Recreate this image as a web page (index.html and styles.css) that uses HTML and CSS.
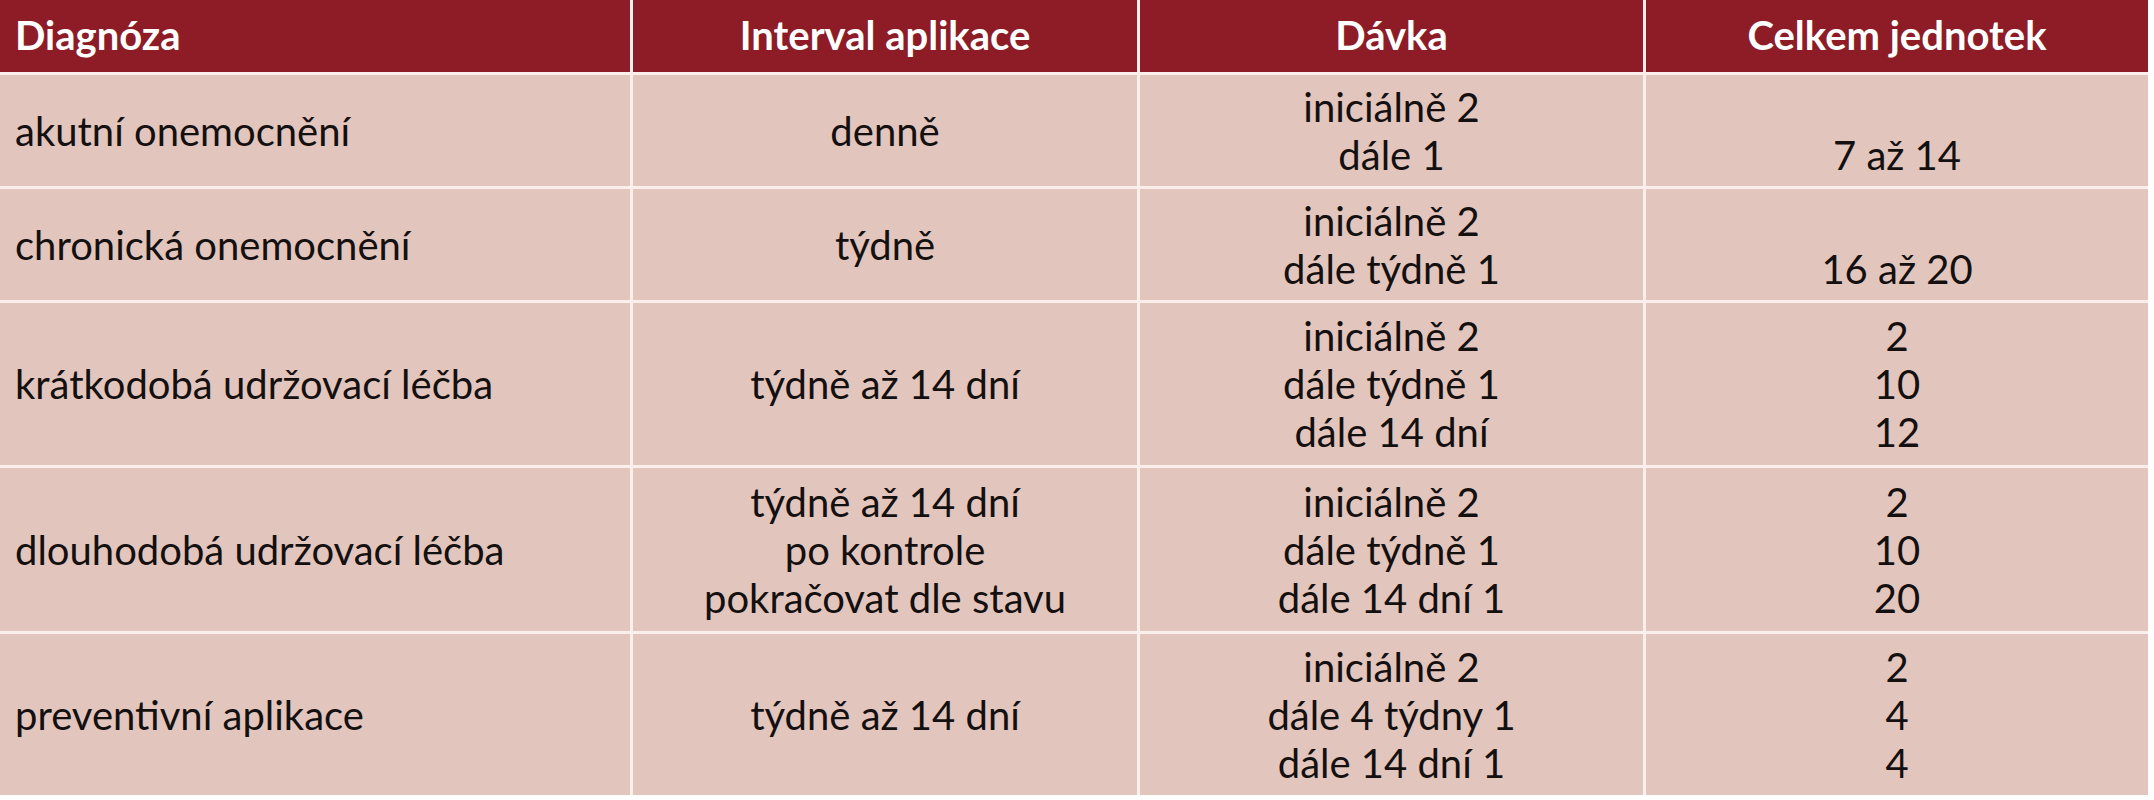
FILE: index.html
```html
<!DOCTYPE html>
<html lang="cs">
<head>
<meta charset="utf-8">
<title>Dávkování</title>
<link rel="stylesheet" href="styles.css">
</head>
<body>
<div class="table">
  <div class="cell head first">Diagnóza</div>
  <div class="cell head">Interval aplikace</div>
  <div class="cell head">Dávka</div>
  <div class="cell head">Celkem jednotek</div>

  <div class="cell first"><div>akutní onemocnění</div></div>
  <div class="cell"><div>denně</div></div>
  <div class="cell"><div>iniciálně 2</div><div>dále 1</div></div>
  <div class="cell"><div class="empty">&nbsp;</div><div>7 až 14</div></div>

  <div class="cell first"><div>chronická onemocnění</div></div>
  <div class="cell"><div>týdně</div></div>
  <div class="cell"><div>iniciálně 2</div><div>dále týdně 1</div></div>
  <div class="cell"><div class="empty">&nbsp;</div><div>16 až 20</div></div>

  <div class="cell first"><div>krátkodobá udržovací léčba</div></div>
  <div class="cell"><div>týdně až 14 dní</div></div>
  <div class="cell"><div>iniciálně 2</div><div>dále týdně 1</div><div>dále 14 dní</div></div>
  <div class="cell"><div>2</div><div>10</div><div>12</div></div>

  <div class="cell first"><div>dlouhodobá udržovací léčba</div></div>
  <div class="cell"><div>týdně až 14 dní</div><div>po kontrole</div><div>pokračovat dle stavu</div></div>
  <div class="cell"><div>iniciálně 2</div><div>dále týdně 1</div><div>dále 14 dní 1</div></div>
  <div class="cell"><div>2</div><div>10</div><div>20</div></div>

  <div class="cell first"><div>preventivní aplikace</div></div>
  <div class="cell"><div>týdně až 14 dní</div></div>
  <div class="cell"><div>iniciálně 2</div><div>dále 4 týdny 1</div><div>dále 14 dní 1</div></div>
  <div class="cell"><div>2</div><div>4</div><div>4</div></div>
</div>
</body>
</html>
```

FILE: styles.css
```css
html, body {
  margin: 0;
  padding: 0;
  background: #ffffff;
}

body {
  font-family: Lato, "Open Sans", "Liberation Sans", sans-serif;
  font-size: 40px;
  line-height: 48px;
  color: #141010;
}

.table {
  display: grid;
  width: 2148px;
  grid-template-columns: 630px 504px 503px 502px;
  grid-template-rows: 72px 111px 111px 162px 163px 161px;
  gap: 3px;
  background: #fbefec;
}

.cell {
  background: #e2c5bc;
  display: flex;
  flex-direction: column;
  justify-content: center;
  align-items: center;
  text-align: center;
  white-space: nowrap;
}

.cell.first {
  align-items: flex-start;
  text-align: left;
  padding-left: 15px;
}

.cell.head {
  background: #8d1c27;
  color: #ffffff;
  font-weight: 700;
  padding-bottom: 2px;
}
```
